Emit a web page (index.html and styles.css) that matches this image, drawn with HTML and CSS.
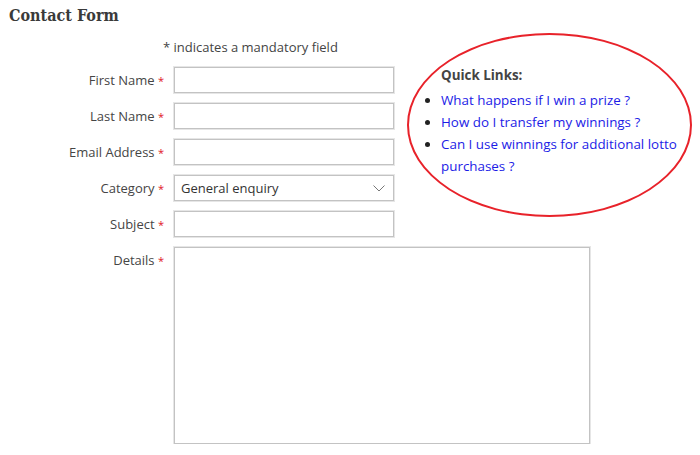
FILE: index.html
```html
<!DOCTYPE html>
<html>
<head>
<meta charset="utf-8">
<link rel="stylesheet" href="styles.css">
</head>
<body>
<div class="page">
  <h2 class="title">Contact Form</h2>
  <form class="form">
    <div class="note">* indicates a mandatory field</div>
    <aside class="quick">
      <div class="quick-title">Quick Links:</div>
      <ul class="quick-list">
        <li><a href="#">What happens if I win a prize ?</a></li>
        <li><a href="#">How do I transfer my winnings ?</a></li>
        <li><a href="#">Can I use winnings for additional lotto purchases ?</a></li>
      </ul>
    </aside>
    <label class="lbl">First Name <span class="req">*</span></label>
    <input class="field" type="text">
    <label class="lbl">Last Name <span class="req">*</span></label>
    <input class="field" type="text">
    <label class="lbl">Email Address <span class="req">*</span></label>
    <input class="field" type="text">
    <label class="lbl">Category <span class="req">*</span></label>
    <div class="select-wrap">
      <select class="field select"><option>General enquiry</option></select>
      <svg class="chev" width="12" height="7" viewBox="0 0 12 7"><path d="M0.5 0.5 L6 6 L11.5 0.5" fill="none" stroke="#777" stroke-width="1"/></svg>
    </div>
    <label class="lbl">Subject <span class="req">*</span></label>
    <input class="field" type="text">
    <label class="lbl">Details <span class="req">*</span></label>
    <textarea class="field area"></textarea>
  </form>
</div>
</body>
</html>
```
FILE: styles.css
```css
html, body {
  margin: 0;
  padding: 0;
  background: #fff;
}
body {
  font-family: "Open Sans", "DejaVu Sans", sans-serif;
  font-size: 13px;
  color: #454545;
}
.page {
  padding-left: 9px;
}
.title {
  margin: 5px 0 0 0;
  font-family: "DejaVu Serif Condensed", "Liberation Serif", serif;
  font-stretch: condensed;
  font-weight: bold;
  font-size: 16px;
  line-height: 22px;
  color: #3a3a3a;
}
.form {
  margin-top: 6px;
  display: grid;
  grid-template-columns: 155px 220px 288px;
  column-gap: 10px;
  row-gap: 10px;
  align-items: start;
}
.note {
  grid-column: 1 / 3;
  grid-row: 1;
  padding-left: 154px;
  padding-top: 5px;
  line-height: 19px;
  height: 19px;
  color: #444;
  white-space: nowrap;
}
.lbl {
  grid-column: 1;
  text-align: right;
  height: 26px;
  line-height: 26px;
  white-space: nowrap;
  color: #454545;
}
.req {
  color: #e0141e;
  font-size: 11px;
  line-height: 1;
}
.field {
  grid-column: 2;
  box-sizing: border-box;
  width: 220px;
  height: 26px;
  margin: 0;
  border: 1px solid #c3c3c3;
  box-shadow: 0 0 0 1px #e6e6e6;
  background: #fff;
  font-family: inherit;
  font-size: 13px;
  padding: 0 6px;
  display: block;
}
.select-wrap {
  grid-column: 2;
  position: relative;
  height: 26px;
}
.select {
  appearance: none;
  -webkit-appearance: none;
  color: #333;
  width: 220px;
  border-radius: 0;
}
.chev {
  position: absolute;
  right: 9px;
  top: 10px;
}
.area {
  grid-column: 2 / 4;
  width: 416px;
  height: 197px;
  resize: none;
}
.quick {
  grid-column: 3;
  grid-row: 1 / 7;
  margin-left: 3px;
  box-sizing: border-box;
  width: 285px;
  height: 184px;
  border: 2px solid #e8222a;
  border-radius: 50%;
  padding: 30px 4px 0 32px;
  font-size: 13.4px;
}
.quick-title {
  font-weight: bold;
  color: #444;
  line-height: 20px;
  margin-bottom: 4px;
}
.quick-list {
  margin: 0;
  padding: 0;
  list-style: disc outside;
  color: #222;
}
.quick-list li {
  line-height: 22px;
}
.quick-list a {
  color: #1c1ce6;
  text-decoration: none;
}
```
